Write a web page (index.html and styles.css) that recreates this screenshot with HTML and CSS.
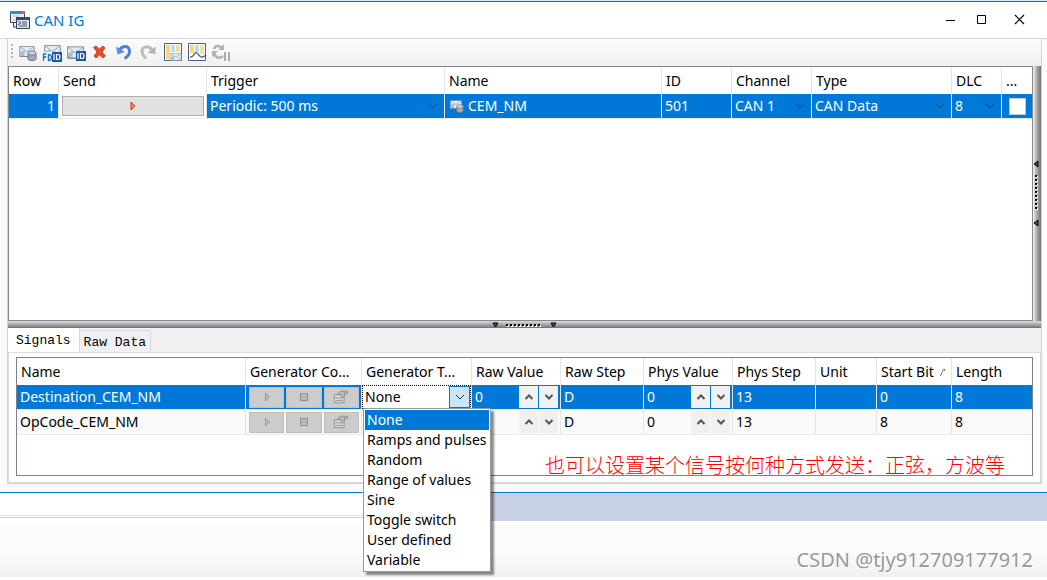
FILE: index.html
```html
<!DOCTYPE html>
<html lang="en">
<head>
<meta charset="utf-8">
<title>CAN IG</title>
<link rel="stylesheet" href="styles.css">
</head>
<body>
<svg class="defs" aria-hidden="true">
  <defs>
    <symbol id="envelope" viewBox="0 0 18 13">
      <path d="M.5.500h17v12H.5z" fill="#e3ebf3" stroke="#7e8c9d"/><path d="M1 7l5-2v7H1z" fill="#b4c4d3"/>
      <path d="M1 1l8 6 8-6M1 12l6-6M17 12l-6-6" fill="none" stroke="#8fa1b3"/>
      <path d="M1 12.500h17" stroke="#6f7d8f"/>
    </symbol>
    <symbol id="drum" viewBox="0 0 10 11">
      <path d="M1 3v6c0 2 8 2 8 0V3" fill="#a3a9b5" stroke="#6c7482"/><ellipse cx="5" cy="3" rx="4" ry="2" fill="#d3d8e0" stroke="#7c8492"/>
    </symbol>
    <symbol id="badge-id" viewBox="0 0 10 10">
      <path d="M0 0h10v10H0z" fill="#1d56a5"/><path d="M2 2v6M4.500 2.500v5h1.500q2 0 2-2.500t-2-2.500z" fill="none" stroke="#fff" stroke-width="1.200"/>
    </symbol>
    <symbol id="chev" viewBox="0 0 12 12"><path d="M2 4l4 4 4-4" fill="none" stroke="currentColor"/></symbol>
    <symbol id="up" viewBox="0 0 10 10"><path d="M1.500 7L5 3.500 8.500 7" fill="none" stroke="#555" stroke-width="2"/></symbol>
    <symbol id="down" viewBox="0 0 10 10"><path d="M1.500 3L5 6.500 8.500 3" fill="none" stroke="#555" stroke-width="2"/></symbol>
    <symbol id="play-off" viewBox="0 0 16 16"><path d="M6.500 4v8l4-4z" fill="#bbb" stroke="#999"/></symbol>
    <symbol id="stop-off" viewBox="0 0 16 16"><path d="M4.500 4.500h7v7h-7z" fill="#bbb" stroke="#8f8f8f"/><path d="M5 8h6" stroke="#aaa"/></symbol>
    <symbol id="props-off" viewBox="0 0 18 18">
      <path d="M1.500 6.500h11v9h-11z" fill="#d6d6d6" stroke="#8f8f8f"/><path d="M3 10h2M3 13h2M6 10h5M6 13h5" stroke="#888"/>
      <path d="M5 6l3-3.500h6l2 2h-3v4l-2 1-2-3z" fill="#b9b9b9" stroke="#8a8a8a"/><path d="M14 2h3v4h-3z" fill="#a2a2a2"/>
    </symbol>
  </defs>
</svg>

<main class="window">
  <header class="titlebar">
    <svg class="app-icon" viewBox="0 0 20 18" aria-hidden="true">
      <path d="M.5.500h14v11H.5z" fill="#e9eef5" stroke="#3a4560"/><path d="M0 0h15v3H0z" fill="#3f83d8"/><path d="M12 0h3v3h-3z" fill="#e26144"/>
      <path d="M3 5h6M3 9h3" stroke="#aeb9c9"/><path d="M3.500 12v4h3" fill="none" stroke="#333b56"/>
      <path d="M6.500 6.500h13v11h-13z" fill="#dce4ee" stroke="#333b56"/><path d="M6 6h14v3H6z" fill="#3b4666"/><path d="M8 10l3 2-3 2M12 11h5M12 13h5M9 15h8" fill="none" stroke="#4a566c"/>
    </svg>
    <h1 class="title">CAN IG</h1>
    <div class="window-buttons">
      <button class="win-btn" aria-label="Minimize"><svg viewBox="0 0 12 12"><path d="M1 6.500h9"  stroke="#000"/></svg></button>
      <button class="win-btn" aria-label="Maximize"><svg viewBox="0 0 12 12"><path d="M1.500 1.500h8v8h-8z" fill="none" stroke="#000"/></svg></button>
      <button class="win-btn close" aria-label="Close"><svg viewBox="0 0 12 12"><path d="M1 1l9 9M10 1l-9 9" stroke="#000" stroke-width="1.200"/></svg></button>
    </div>
  </header>

  <div class="client">
    <div class="toolbar" role="toolbar" aria-label="Frame list">
      <span class="grip"></span>
      <button class="tool" aria-label="Add frame from database"><svg viewBox="0 0 20 20"><use href="#envelope" x="1" y="4" width="16" height="11"/><use href="#drum" x="9" y="8" width="10" height="11"/></svg></button>
      <button class="tool" aria-label="Add CAN FD frame"><svg viewBox="0 0 20 20"><use href="#envelope" x="2" y="3" width="17" height="12"/><path d="M0 10h10v10H0z" fill="#f6f6f6"/><path d="M1.500 19v-7h3M1.500 15h3M6.500 12.500v6q3 0 3-3t-3-3z" fill="none" stroke="#1f6fc0" stroke-width="1.300"/><use href="#badge-id" x="10" y="10" width="10" height="10"/></svg></button>
      <button class="tool" aria-label="Add CAN frame"><svg viewBox="0 0 20 20"><use href="#envelope" x="1" y="4" width="17" height="13"/><use href="#badge-id" x="10" y="9" width="10" height="10"/></svg></button>
      <button class="tool" aria-label="Delete"><svg viewBox="0 0 20 20"><path d="M3.500 5.500l2.500-1.500 3.500 3 3.500-3 2 2-3 4 3.500 4-2.500 2-3.500-3-3.500 3-2-2 3-4z" fill="#e5502c" stroke="#b8351a" stroke-width=".8"/></svg></button>
      <button class="tool" aria-label="Undo"><svg viewBox="0 0 20 20"><path d="M5.500 8.500C7 4 15 2 15.500 9c0 4-2 6-5 7.500" fill="none" stroke="#4a80d6" stroke-width="3"/><path d="M2 4.500l1.500 8 7.500-2.500z" fill="#5b8fe0"/></svg></button>
      <button class="tool" aria-label="Redo"><svg viewBox="0 0 20 20"><path d="M14 8.500C12 3.500 4 3.500 4 9.500c0 3 2 5 4 7" fill="none" stroke="#bcbcbc" stroke-width="3"/><path d="M17.500 4.500v7.500l-8-1z" fill="#b3b3b3"/></svg></button>
      <button class="tool wide" aria-label="Frame layout"><svg viewBox="0 0 20 20"><path d="M1.500 1.500h17v17h-17z" fill="#fff" stroke="#46618c"/><path d="M3 3h4v14H3z" fill="#ffd774"/><path d="M8 3h4v7H8z" fill="#bddcf3"/><path d="M13 3h4v7h-4z" fill="#f8dd8c"/><use href="#envelope" x="7" y="11" width="12" height="8"/></svg></button>
      <button class="tool" aria-label="Signal layout"><svg viewBox="0 0 20 20"><path d="M1.500 1.500h17v17h-17z" fill="#fff" stroke="#46618c"/><path d="M3 3h4v8H3z" fill="#ffd774"/><path d="M8 3h4v7H8z" fill="#bddcf3"/><path d="M13 3h4v9h-4z" fill="#f5df9e"/><path d="M3 15c4 1 4-6 7-4s3 7 9 2" fill="none" stroke="#53647a" stroke-width="1.500"/></svg></button>
      <button class="tool" aria-label="Refresh" disabled><svg viewBox="0 0 20 20"><path d="M11 7C9 3 4 3 3 7M3 11c1 5 6 6 9 3" fill="none" stroke="#b2b2b2" stroke-width="2.500"/><path d="M13 2v6H7zM1 15V9h6z" fill="#b2b2b2"/><path d="M13 10h2v9h-2zM17 10h2v9h-2z" fill="#ababab"/></svg></button>
    </div>

    <div class="upper">
      <div class="grid-box">
        <table class="grid">
          <colgroup><col class="w50"><col class="w148"><col class="w238"><col><col class="w70"><col class="w80"><col class="w140"><col class="w50"><col class="w30"></colgroup>
          <thead><tr><th>Row</th><th>Send</th><th>Trigger</th><th>Name</th><th>ID</th><th>Channel</th><th>Type</th><th>DLC</th><th>...</th></tr></thead>
          <tbody>
            <tr class="selected">
              <td class="num">1</td>
              <td class="send-cell"><button class="send" aria-label="Send"><svg viewBox="0 0 16 16"><path d="M6 4v8l4-4z" fill="#f58a5c" stroke="#c63c15"/></svg></button></td>
              <td><div class="combo"><select class="pick" aria-label="Trigger"><option>Periodic: 500 ms</option></select><svg class="chev"><use href="#chev"/></svg></div></td>
              <td><span class="frame"><svg viewBox="0 0 14 14"><use href="#envelope" y="1" width="12" height="9"/><use href="#drum" x="6" y="5" width="8" height="9"/></svg>CEM_NM</span></td>
              <td>501</td>
              <td><div class="combo"><select class="pick" aria-label="Channel"><option>CAN 1</option></select><svg class="chev"><use href="#chev"/></svg></div></td>
              <td><div class="combo"><select class="pick" aria-label="Type"><option>CAN Data</option></select><svg class="chev"><use href="#chev"/></svg></div></td>
              <td><div class="combo"><select class="pick" aria-label="DLC"><option>8</option></select><svg class="chev"><use href="#chev"/></svg></div></td>
              <td class="tick-cell"><input class="tick" type="checkbox" aria-label="Option"></td>
            </tr>
          </tbody>
        </table>
      </div>
      <div class="splitter-v"><svg viewBox="0 0 8 66"><path d="M5 0v6L1 3zM5 59v6l-4-3z" fill="#555" stroke="#000"/><path d="M4 15v36" stroke="#fff" stroke-width="2" stroke-dasharray="2 2"/><path d="M3 14v36" stroke="#000" stroke-width="2" stroke-dasharray="2 2"/></svg></div>
    </div>
    <div class="splitter-h"><svg viewBox="0 0 66 8"><path d="M1 2h5L3.500 6zM59 2h5l-2.500 4z" fill="#555" stroke="#000"/><path d="M15 5h36" stroke="#fff" stroke-width="2" stroke-dasharray="2 2"/><path d="M14 4h36" stroke="#000" stroke-width="2" stroke-dasharray="2 2"/></svg></div>

    <div class="tabs" role="tablist">
      <button class="tab active" role="tab" aria-selected="true">Signals</button>
      <button class="tab" role="tab" aria-selected="false">Raw Data</button>
    </div>
    <section class="tab-page">
      <div class="grid-box signals">
        <table class="grid">
          <colgroup><col><col class="w116"><col class="w110"><col class="w89"><col class="w83"><col class="w89"><col class="w83"><col class="w61"><col class="w75"><col class="w80"></colgroup>
          <thead><tr><th>Name</th><th>Generator Co...</th><th>Generator T...</th><th>Raw Value</th><th>Raw Step</th><th>Phys Value</th><th>Phys Step</th><th>Unit</th><th>Start Bit<svg class="sort" viewBox="0 0 5 9"><path d="M.5 8L3.500 1M4.500 1v2" stroke="#777" fill="none"/></svg></th><th>Length</th></tr></thead>
          <tbody>
            <tr class="selected">
              <td>Destination_CEM_NM</td>
              <td class="gen-cell"><div class="gen"><button disabled aria-label="Start"><svg><use href="#play-off"/></svg></button><button disabled aria-label="Stop"><svg><use href="#stop-off"/></svg></button><button disabled aria-label="Settings"><svg><use href="#props-off"/></svg></button></div></td>
              <td class="type-cell">
                <div class="combo open"><select class="pick" aria-label="Generator type"><option>None</option></select><span class="drop"><svg class="chev"><use href="#chev"/></svg></span></div>
                <ul class="menu" role="listbox" aria-label="Generator types">
                  <li role="option" aria-selected="true" class="current">None</li><li role="option">Ramps and pulses</li><li role="option">Random</li><li role="option">Range of values</li><li role="option">Sine</li><li role="option">Toggle switch</li><li role="option">User defined</li><li role="option">Variable</li>
                </ul>
              </td>
              <td class="spin-cell"><div class="spin"><input value="0" aria-label="Raw value"><button aria-label="Increase"><svg><use href="#up"/></svg></button><button aria-label="Decrease"><svg><use href="#down"/></svg></button></div></td>
              <td>D</td>
              <td class="spin-cell"><div class="spin"><input value="0" aria-label="Physical value"><button aria-label="Increase"><svg><use href="#up"/></svg></button><button aria-label="Decrease"><svg><use href="#down"/></svg></button></div></td>
              <td>13</td><td></td><td>0</td><td>8</td>
            </tr>
            <tr>
              <td>OpCode_CEM_NM</td>
              <td class="gen-cell"><div class="gen"><button disabled aria-label="Start"><svg><use href="#play-off"/></svg></button><button disabled aria-label="Stop"><svg><use href="#stop-off"/></svg></button><button disabled aria-label="Settings"><svg><use href="#props-off"/></svg></button></div></td>
              <td></td>
              <td class="spin-cell"><div class="spin"><input aria-label="Raw value"><button aria-label="Increase"><svg><use href="#up"/></svg></button><button aria-label="Decrease"><svg><use href="#down"/></svg></button></div></td>
              <td>D</td>
              <td class="spin-cell"><div class="spin"><input value="0" aria-label="Physical value"><button aria-label="Increase"><svg><use href="#up"/></svg></button><button aria-label="Decrease"><svg><use href="#down"/></svg></button></div></td>
              <td>13</td><td></td><td>8</td><td>8</td>
            </tr>
          </tbody>
        </table>
        <p class="note" lang="zh">也可以设置某个信号按何种方式发送：正弦，方波等</p>
      </div>
    </section>
  </div>
</main>
<div class="backdrop"><div class="strip-left"></div><div class="strip-right"></div></div>
<footer class="footer">CSDN @tjy912709177912</footer>
</body>
</html>
```

FILE: styles.css
```css
* { box-sizing: border-box; }
body { margin: 0; background: #fff; color: #000; font: 14px/20px "Noto Sans", "Open Sans", sans-serif; }
button, input, select { font: inherit; color: inherit; }
button { padding: 0; border: 0; background: none; }
.defs { position: absolute; width: 0; height: 0; }

.window { border-top: 1px solid #dce6f2; border-bottom: 1px solid #0078c8; background: #fbfbfb; padding-bottom: 8px; }
.titlebar { display: flex; align-items: center; height: 38px; padding: 0 21px 0 10px; background: #fff; border-top: 1px solid #0f70b8; border-bottom: 1px solid #d8d8d8; }
.app-icon { width: 20px; height: 18px; }
.title { flex: 1; margin: 0 0 0 4px; font-size: 15px; font-weight: 400; color: #0078d7; }
.window-buttons { display: flex; gap: 19px; }
.win-btn { width: 12px; height: 12px; display: flex; }
.win-btn.close { margin-left: 7px; }
.win-btn svg { width: 12px; height: 12px; }

.client { margin: 0 5px 0 7px; border-left: 1px solid #d4d4d4; border-right: 1px solid #d4d4d4; border-bottom: 1px solid #d4d4d4; background: #f0f0f0; }
.toolbar { display: flex; align-items: center; gap: 4px; height: 27px; padding: 0 0 2px 3px; background: linear-gradient(#fcfcfc, #f0f0f0); }
.grip { width: 2px; height: 15px; margin-right: 1px; background: repeating-linear-gradient(#b4b4b4 0 2px, transparent 2px 4px); }
.tool { width: 20px; height: 20px; display: flex; }
.tool.wide { margin-left: 1px; }
.tool svg { width: 20px; height: 20px; }

.upper { display: flex; height: 255px; }
.grid-box { flex: 1; min-width: 0; background: #fff; border: 1px solid #828790; }
.splitter-v { width: 8px; display: flex; align-items: center; background: linear-gradient(90deg, #f4f4f4, #a8a8a8 50%, #707070); }
.splitter-v svg { width: 8px; height: 66px; }
.splitter-h { height: 7px; display: flex; justify-content: center; background: linear-gradient(#ddd, #a8a8a8 50%, #707070); }
.splitter-h svg { width: 66px; height: 8px; }

.grid { width: 100%; table-layout: fixed; border-collapse: separate; border-spacing: 0; }
.w30 { width: 30px; } .w50 { width: 50px; } .w61 { width: 61px; } .w70 { width: 70px; } .w75 { width: 75px; }
.w80 { width: 80px; } .w83 { width: 83px; } .w89 { width: 89px; } .w110 { width: 110px; } .w116 { width: 116px; }
.w140 { width: 140px; } .w148 { width: 148px; } .w238 { width: 238px; }
.grid th { height: 27px; padding: 0 4px; border-right: 1px solid #e5e5e5; font-weight: 400; text-align: left; white-space: nowrap; overflow: hidden; text-overflow: ellipsis; }
.grid td { height: 25px; padding: 0 3px; background: #fafafa; border-right: 1px solid #e5e5e5; border-bottom: 1px solid #eaeaea; white-space: nowrap; }
.grid th:last-child, .grid td:last-child { border-right: 0; }
.grid .selected td { background: #0078d7; color: #fff; }
.grid .num { text-align: right; }
.grid .selected .send-cell { padding: 0 2px 0 3px; background: #fff; }
.send { display: flex; width: 100%; height: 20px; justify-content: center; align-items: center; background: #e1e1e1; border: 1px solid #adadad; }
.send svg { width: 16px; height: 16px; }
.frame { display: flex; align-items: center; gap: 4px; padding-left: 2px; }
.frame svg { width: 14px; height: 14px; }
.combo { display: flex; align-items: center; }
.pick { flex: 1; min-width: 0; height: 22px; padding: 0; border: 0; background: transparent; appearance: none; }
.chev { width: 12px; height: 12px; margin-right: 2px; color: #17405f; flex: none; }
.grid .tick-cell { padding: 0 0 0 7px; }
.tick { display: block; width: 17px; height: 17px; margin: 0; appearance: none; background: #fff; border: 1px solid #ccc; }
.sort { width: 5px; height: 9px; margin-left: 6px; }

.tabs { display: flex; align-items: flex-end; height: 24px; font: 13px/16px "Liberation Mono", monospace; }
.tab { height: 22px; padding: 2px 4px 0; background: #f0f0f0; border: 1px solid #d9d9d9; border-left: 0; border-bottom: 0; }
.tab.active { height: 24px; padding: 1px 8px 0; background: #fff; border-top: 0; }
.tab-page { display: flex; padding: 4px 7px 6px; background: #fff; border: 1px solid #dcdcdc; }
.signals { position: relative; height: 119px; border-color: #7c7f90; }
.grid .gen-cell { padding: 0 2px 0 3px; }
.gen { display: grid; grid-template-columns: repeat(3, 1fr); gap: 2px; }
.gen button { height: 21px; display: flex; align-items: center; justify-content: center; background: #ccc; border: 1px solid #bfbfbf; }
.gen svg { width: 16px; height: 16px; }
.grid .type-cell { position: relative; padding: 0; }
.open { height: 24px; padding-left: 2px; color: #000; background: #fff; border: 1px dotted #000; }
.drop { display: flex; align-items: center; justify-content: center; width: 21px; height: 22px; background: #cce4f7; border: 1px solid #0078d7; }
.drop .chev { margin: 0; color: #333; }
.menu { position: absolute; z-index: 2; top: 23px; left: 1px; width: 128px; margin: 0; padding: 1px 1px 0; list-style: none; color: #000; background: #fff; border: 1px solid #999; box-shadow: 3px 3px 2px rgba(0, 0, 0, .45); }
.menu li { height: 20px; padding-left: 2px; line-height: 20px; }
.menu .current { background: #0078d7; color: #fff; }
.menu li:last-child { height: 21px; }
.grid .spin-cell { padding: 0 2px 0 3px; }
.spin { display: flex; gap: 1px; }
.spin input { flex: 1; min-width: 0; height: 22px; padding: 0 0 2px; border: 0; background: transparent; }
.spin button { width: 19px; height: 22px; display: flex; align-items: center; justify-content: center; background: #f0f0f0; }
.spin svg { width: 10px; height: 10px; }
.note { position: absolute; right: 27px; bottom: -1px; margin: 0; color: #f00; font: 300 20px/22px "Noto Sans CJK SC", sans-serif; }

.backdrop { display: flex; height: 32px; background: #fff; }
.strip-left { flex: 0 0 35%; height: 25px; border-bottom: 1px solid #d0d0d0; box-shadow: inset 0 -1px #fff, inset 0 -2px #e4e4e4; }
.strip-right { flex: 1; height: 28px; background: #c8d1e3; }
.footer { height: 52px; margin-bottom: 3px; padding: 23px 14px 0 0; text-align: right; color: #999; font: 20px/24px "Noto Sans", sans-serif; background: linear-gradient(#fcfcfc 50%, #f0f0f0); text-shadow: 1px 1px #fff; }
```
